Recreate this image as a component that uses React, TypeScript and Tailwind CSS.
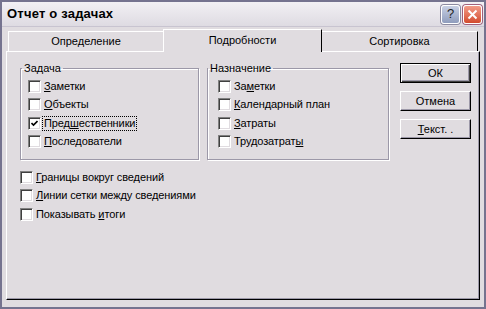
import React from 'react';

function Box({ checked }: { checked?: boolean }) {
  return (
    <span className="w-[13px] h-[13px] shrink-0 bg-white border border-t-[#808080] border-l-[#808080] border-r-white border-b-white shadow-[inset_1px_1px_0_#404040,inset_-1px_-1px_0_#e0dce0] flex items-center justify-center">
      {checked && (
        <svg width="7" height="7" viewBox="0 0 7 7">
          <path d="M0.5 3 L2.5 5 L6.5 1" stroke="#000" strokeWidth="1.6" fill="none" />
        </svg>
      )}
    </span>
  );
}

function Check({
  pre = '',
  u,
  post = '',
  checked,
  focus,
}: {
  pre?: string;
  u: string;
  post?: string;
  checked?: boolean;
  focus?: boolean;
}) {
  return (
    <div className="flex items-center h-[18.5px]">
      <Box checked={checked} />
      <span
        className={`ml-[2px] px-[1px] leading-[13px] whitespace-nowrap tracking-[-0.1px] ${
          focus ? 'outline outline-1 outline-dotted outline-black' : ''
        }`}
      >
        {pre}
        <span className="underline underline-offset-[1px]">{u}</span>
        {post}
      </span>
    </div>
  );
}

function Btn({ children, def }: { children: React.ReactNode; def?: boolean }) {
  return (
    <button
      className={`w-[71px] h-[20px] flex items-center justify-center bg-[#e0dce0] ${
        def
          ? 'border border-black shadow-[inset_1px_1px_0_#fff,inset_-1px_-1px_0_#404040,inset_-2px_-2px_0_#9c98a8]'
          : 'border border-t-white border-l-white border-r-black border-b-black shadow-[inset_-1px_-1px_0_#9c98a8]'
      }`}
    >
      {children}
    </button>
  );
}

export default function App() {
  return (
    <div className="w-[486px] h-[309px] bg-[#e0dce0] border-2 border-[#75738f] font-['Liberation_Sans',Arial,sans-serif] text-[11px] text-black flex flex-col overflow-hidden">
      {/* title bar */}
      <div className="h-[25px] shrink-0 flex items-center justify-between pl-[5px] pr-[2px] bg-gradient-to-b from-[#f2f0f4] to-[#dedbe2] border-b border-[#c8c4d0]">
        <span className="font-bold text-[13px] tracking-[0.2px]">Отчет о задачах</span>
        <div className="flex gap-[3px]">
          <div className="w-[19px] h-[19px] rounded-[3px] border border-white bg-gradient-to-b from-[#c8d0e4] to-[#8f9cbc] flex items-center justify-center text-[#222] text-[13px] shadow-[0_0_0_1px_#8c8aa0]">
            ?
          </div>
          <div className="w-[19px] h-[19px] rounded-[3px] border border-white bg-gradient-to-b from-[#f29b88] to-[#d24a2c] flex items-center justify-center shadow-[0_0_0_1px_#a0607c]">
            <svg width="11" height="11" viewBox="0 0 11 11">
              <path d="M1.5 1.5 L9.5 9.5 M9.5 1.5 L1.5 9.5" stroke="#fff" strokeWidth="2" />
            </svg>
          </div>
        </div>
      </div>

      <div className="flex-1 flex flex-col px-[4px] pt-[1px] pb-[7px]">
        {/* tabs */}
        <div className="flex items-end pl-[2px] h-[23px] shrink-0 relative z-10">
          <div className="w-[155px] h-[20px] border-t border-l border-white flex items-center justify-center">
            Определение
          </div>
          <div className="w-[159px] h-[23px] -mb-px bg-[#e0dce0] border-t border-l border-white border-r border-r-black flex items-center justify-center pb-[2px]">
            Подробности
          </div>
          <div className="w-[156px] h-[20px] border-t border-white border-r border-r-black flex items-center justify-center">
            Сортировка
          </div>
        </div>

        {/* panel */}
        <div className="flex-1 border border-t-white border-l-white border-r-black border-b-black shadow-[inset_-1px_-1px_0_#9c98a8] pl-[13px] pt-[10px]">
          <div className="flex">
            <fieldset className="w-[179px] h-[98px] border border-[#9c98a8] shadow-[inset_1px_1px_0_#fff,1px_1px_0_#fff] pl-[7px] pt-[2px]">
              <legend className="ml-[-6px] px-[2px] leading-[13px]">Задача</legend>
              <Check u="З" post="аметки" />
              <Check u="О" post="бъекты" />
              <Check pre="Пред" u="ш" post="ественники" checked focus />
              <Check u="П" post="оследователи" />
            </fieldset>
            <fieldset className="ml-[8px] w-[182px] h-[98px] border border-[#9c98a8] shadow-[inset_1px_1px_0_#fff,1px_1px_0_#fff] pl-[10px] pt-[2px]">
              <legend className="ml-[-10px] px-[2px] leading-[13px]">Назначение</legend>
              <Check pre="За" u="м" post="етки" />
              <Check u="К" post="алендарный план" />
              <Check u="З" post="атраты" />
              <Check pre="Трудозатрат" u="ы" />
            </fieldset>
            <div className="ml-[11px] pt-[1px] flex flex-col gap-[8px]">
              <Btn def>ОК</Btn>
              <Btn>Отмена</Btn>
              <Btn>
                <span>
                  <span className="underline underline-offset-[1px]">Т</span>екст. .
                </span>
              </Btn>
            </div>
          </div>
          <div className="mt-[8px]">
            <Check u="Г" post="раницы вокруг сведений" />
            <Check u="Л" post="инии сетки между сведениями" />
            <Check pre="Показывать " u="и" post="тоги" />
          </div>
        </div>
      </div>
    </div>
  );
}
